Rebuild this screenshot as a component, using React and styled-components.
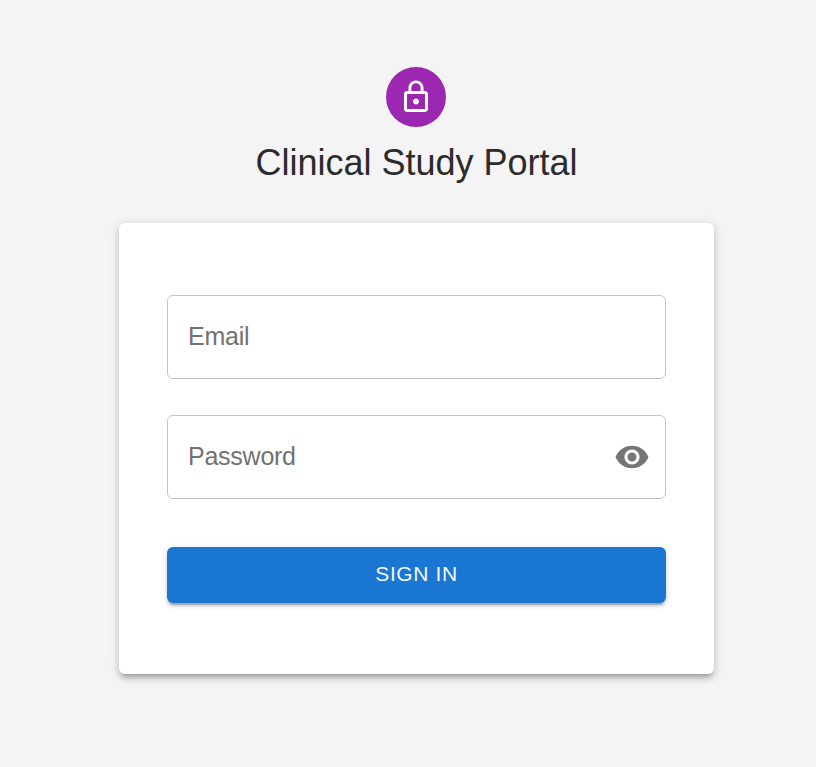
import React from 'react';
import styled, { createGlobalStyle } from 'styled-components';
import { MdLockOutline, MdVisibility } from 'react-icons/md';

const GlobalStyle = createGlobalStyle`
  *, *::before, *::after { box-sizing: border-box; }
  body {
    margin: 0;
    background: #f4f4f4;
    color: #2b2b2b;
    font-family: "Liberation Sans", Arial, sans-serif;
  }
`;

const Page = styled.main`
  min-height: 767px;
  padding-top: 66.5px;
  padding-left: 119px;
`;

const Content = styled.div`
  width: 595px;
  display: flex;
  flex-direction: column;
  align-items: center;
`;

const Avatar = styled.div`
  width: 60px;
  height: 60px;
  margin-right: 1px;
  border-radius: 50%;
  background: #9c27b0;
  color: #fff;
  display: flex;
  align-items: center;
  justify-content: center;
`;

const Title = styled.h1`
  margin: 12px 0 0;
  font-size: 36px;
  font-weight: 400;
  line-height: 48px;
`;

const Card = styled.form`
  width: 100%;
  margin-top: 36px;
  padding: 72px 48px 71.5px;
  border-radius: 6px;
  background: #fff;
  box-shadow:
    0 4.5px 4.5px -3px rgba(0, 0, 0, 0.2),
    0 4.5px 6px 0 rgba(0, 0, 0, 0.14),
    0 1.5px 12px 0 rgba(0, 0, 0, 0.12);
`;

const Field = styled.div`
  height: 84px;
  margin-bottom: ${(p) => p.$gap}px;
  padding: 0 15px 0 20px;
  border: 1.5px solid rgba(0, 0, 0, 0.23);
  border-radius: 6px;
  display: flex;
  align-items: center;
  justify-content: space-between;
  color: #727272;
`;

const Label = styled.label`
  font-size: 25px;
  line-height: 34px;
  letter-spacing: -0.25px;
  padding-bottom: 2px;
`;

const IconButton = styled.button`
  border: 0;
  padding: 0;
  background: none;
  color: rgba(0, 0, 0, 0.54);
  display: flex;
`;

const SubmitButton = styled.button`
  width: 100%;
  height: 56px;
  border: 0;
  padding: 0 0 2px;
  border-radius: 6px;
  background: #1976d2;
  color: #f4f8fd;
  font: 400 21px/37px "Liberation Sans", Arial, sans-serif;
  letter-spacing: 0.6px;
  box-shadow:
    0 4.5px 1.5px -3px rgba(0, 0, 0, 0.2),
    0 3px 3px 0 rgba(0, 0, 0, 0.14),
    0 1.5px 7.5px 0 rgba(0, 0, 0, 0.12);
`;

export default function App() {
  return (
    <>
      <GlobalStyle />
      <Page>
        <Content>
          <Avatar><MdLockOutline size={36} /></Avatar>
          <Title>Clinical Study Portal</Title>
          <Card>
            <Field $gap={36}><Label>Email</Label></Field>
            <Field $gap={48}>
              <Label>Password</Label>
              <IconButton type="button" aria-label="Show password"><MdVisibility size={36} /></IconButton>
            </Field>
            <SubmitButton type="button">SIGN IN</SubmitButton>
          </Card>
        </Content>
      </Page>
    </>
  );
}
